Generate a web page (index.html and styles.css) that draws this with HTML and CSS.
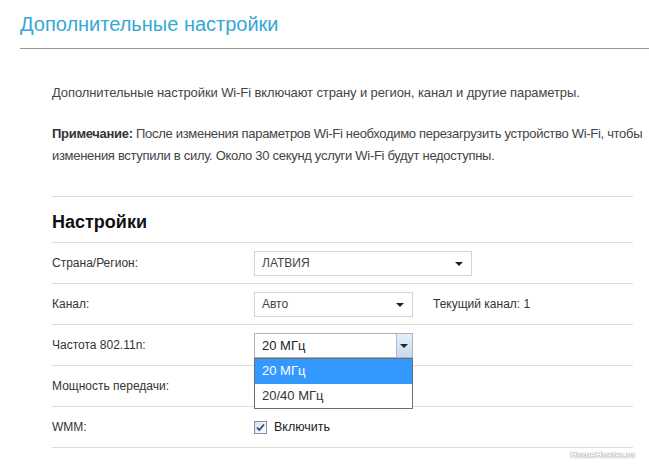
FILE: index.html
```html
<!DOCTYPE html>
<html lang="ru">
<head>
    <meta charset="UTF-8">
    <meta name="viewport" content="width=device-width, initial-scale=1.0">
    <title>Дополнительные настройки</title>
    <link rel="stylesheet" href="styles.css">
</head>
<body>
    <div class="page">
        <h1 class="page-title">Дополнительные настройки</h1>

        <div class="content">
            <p class="intro">Дополнительные настройки Wi-Fi включают страну и регион, канал и другие параметры.</p>
            <p class="note"><b>Примечание:</b> После изменения параметров Wi-Fi необходимо перезагрузить устройство Wi-Fi, чтобы изменения вступили в силу. Около 30 секунд услуги Wi-Fi будут недоступны.</p>

            <h2 class="section-title">Настройки</h2>

            <div class="form-row">
                <div class="form-label">Страна/Регион:</div>
                <div class="select select-wide">ЛАТВИЯ<span class="arrow"></span></div>
            </div>
            <div class="form-row">
                <div class="form-label">Канал:</div>
                <div class="select">Авто<span class="arrow"></span></div>
                <div class="current-channel">Текущий канал: 1</div>
            </div>
            <div class="form-row">
                <div class="form-label">Частота 802.11n:</div>
                <div class="select select-open">20 МГц
                    <span class="drop-button"><span class="arrow"></span></span>
                    <ul class="dropdown">
                        <li class="selected">20 МГц</li>
                        <li>20/40 МГц</li>
                    </ul>
                </div>
            </div>
            <div class="form-row">
                <div class="form-label">Мощность передачи:</div>
            </div>
            <div class="form-row last">
                <div class="form-label">WMM:</div>
                <label class="checkbox">
                    <svg width="13" height="13" viewBox="0 0 13 13">
                        <defs>
                            <linearGradient id="cbFill" x1="0" y1="0" x2="1" y2="1">
                                <stop offset="0" stop-color="#d8e0ea"/>
                                <stop offset="1" stop-color="#ffffff"/>
                            </linearGradient>
                        </defs>
                        <rect x="0.5" y="0.5" width="12" height="12" fill="url(#cbFill)" stroke="#7f93ad"/>
                        <path d="M3 6.5 L5.3 9 L10 3.5" fill="none" stroke="#2a4585" stroke-width="1.8"/>
                    </svg>
                    <span>Включить</span>
                </label>
            </div>
        </div>

        <span class="watermark">HomeHoster.ru</span>
    </div>
</body>
</html>
```

FILE: styles.css
```css
body {
    margin: 0;
    font-family: "Liberation Sans", Arial, sans-serif;
    background-color: #ffffff;
    color: #333;
}
.page {
    position: relative;
    min-height: 465px;
}
.page-title {
    margin: 0 0 0 20px;
    height: 48px;
    line-height: 48px;
    font-size: 20px;
    font-weight: normal;
    color: #35a8d4;
    border-bottom: 1px solid #999;
}
.content {
    width: 581px;
    margin-left: 52px;
}
.intro, .note {
    font-size: 13px;
    line-height: 22px;
    color: #444;
    margin: 0;
}
.intro {
    padding-top: 33px;
    letter-spacing: -0.1px;
}
.note {
    margin-top: 19px;
    margin-bottom: 29px;
    margin-right: -20px;
    letter-spacing: -0.3px;
}
.note b {
    color: #333;
}
.section-title {
    margin: 0;
    padding: 14px 0 9px;
    font-size: 18px;
    line-height: 22px;
    color: #111;
    border-top: 1px solid #ddd;
}
.form-row {
    display: flex;
    align-items: center;
    height: 40px;
    border-top: 1px solid #ddd;
    font-size: 12px;
}
.form-row.last {
    border-bottom: 1px solid #ddd;
}
.form-label {
    width: 202px;
    color: #333;
}
.select {
    position: relative;
    box-sizing: border-box;
    width: 159px;
    height: 25px;
    line-height: 23px;
    padding-left: 7px;
    border: 1px solid #d4d4d4;
    font-size: 12px;
    color: #444;
    background: #fff;
}
.select-wide {
    width: 218px;
}
.arrow {
    position: absolute;
    right: 8px;
    top: 10px;
    width: 0;
    height: 0;
    border-left: 4px solid transparent;
    border-right: 4px solid transparent;
    border-top: 4px solid #222;
}
.current-channel {
    margin-left: 20px;
    color: #333;
}
.select-open {
    border-color: #a9b2bc;
    font-size: 13px;
    color: #222;
}
.drop-button {
    position: absolute;
    right: 0;
    top: 0;
    bottom: 0;
    width: 15px;
    border-left: 1px solid #a9bcd3;
    background: linear-gradient(#e6eef8, #c9dbef);
}
.drop-button .arrow {
    right: 4px;
}
.dropdown {
    position: absolute;
    left: -1px;
    top: 24px;
    width: 159px;
    box-sizing: border-box;
    margin: 0;
    padding: 0;
    list-style: none;
    border: 1px solid #6e6e6e;
    background: #fff;
    z-index: 2;
}
.dropdown li {
    height: 24px;
    line-height: 24px;
    padding-left: 7px;
    font-size: 13px;
    color: #333;
}
.dropdown li.selected {
    background: #3399ff;
    color: #fff;
    height: 25px;
}
.checkbox {
    display: flex;
    align-items: center;
    color: #222;
}
.checkbox svg {
    display: block;
}
.checkbox span {
    margin-left: 7px;
    font-size: 12.5px;
}
.watermark {
    position: absolute;
    right: 12px;
    top: 450px;
    font-size: 9px;
    font-weight: bold;
    color: #fff;
    background: #fff;
    padding: 0 2px;
    text-shadow: 0 0 1px #888, 0 0 1px #888;
}
```
